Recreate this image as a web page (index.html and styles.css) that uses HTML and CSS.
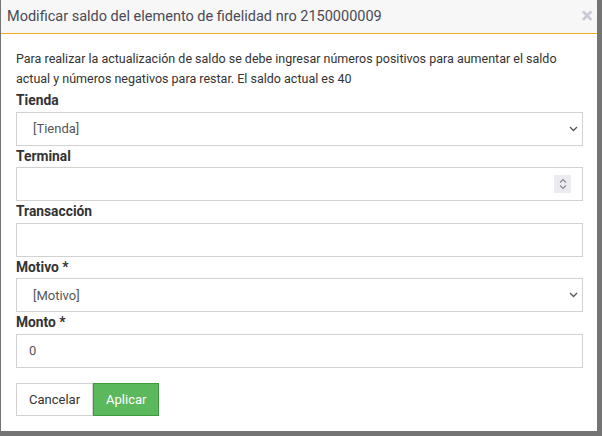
FILE: index.html
```html
<!doctype html>
<html lang="es">
  <head>
    <meta charset="UTF-8" />
    <title>Modificar saldo</title>
    <link rel="stylesheet" href="styles.css">
  </head>
  <body>
    <div class="modal">
      <div class="modal-header">
        <h4>Modificar saldo del elemento de fidelidad nro 2150000009</h4>
        <span class="close">×</span>
      </div>
      <div class="modal-body">
        <p class="help">
          Para realizar la actualización de saldo se debe ingresar números positivos para aumentar el saldo
          actual y números negativos para restar. El saldo actual es 40
        </p>

        <div class="form-group">
          <label>Tienda</label>
          <div class="field">
            <select class="form-control">
              <option>[Tienda]</option>
            </select>
            <svg class="caret" width="9" height="6" viewBox="0 0 9 6">
              <path d="M1 1 L4.5 4.5 L8 1" fill="none" stroke="#555" stroke-width="1.3" />
            </svg>
          </div>
        </div>

        <div class="form-group">
          <label>Terminal</label>
          <div class="field">
            <input type="text" class="form-control" />
            <span class="spinner">
              <svg width="10" height="14" viewBox="0 0 10 14">
                <path d="M2 5.5 L5 2.5 L8 5.5" fill="none" stroke="#8a8a9a" stroke-width="1.2" />
                <path d="M2 8.5 L5 11.5 L8 8.5" fill="none" stroke="#8a8a9a" stroke-width="1.2" />
              </svg>
            </span>
          </div>
        </div>

        <div class="form-group">
          <label>Transacción</label>
          <input type="text" class="form-control" />
        </div>

        <div class="form-group">
          <label>Motivo *</label>
          <div class="field">
            <select class="form-control">
              <option>[Motivo]</option>
            </select>
            <svg class="caret" width="9" height="6" viewBox="0 0 9 6">
              <path d="M1 1 L4.5 4.5 L8 1" fill="none" stroke="#555" stroke-width="1.3" />
            </svg>
          </div>
        </div>

        <div class="form-group">
          <label>Monto *</label>
          <input type="text" class="form-control" value="0" />
        </div>

        <div class="actions">
          <button class="btn btn-default">Cancelar</button>
          <button class="btn btn-success">Aplicar</button>
        </div>
      </div>
    </div>
  </body>
</html>
```

FILE: styles.css
```css
body {
  margin: 0;
  padding: 0;
  background: #747474;
  font-family: Roboto, 'Liberation Sans', Arial, sans-serif;
  color: #333;
}

.modal {
  width: 596px;
  height: 431px;
  margin-left: 1px;
  background: #fff;
  box-sizing: border-box;
}

.modal-header {
  height: 34px;
  background: #f7f7f7;
  border-bottom: 1px solid #f0ad1e;
  box-sizing: border-box;
  display: flex;
  align-items: center;
  justify-content: space-between;
  padding: 0 4px 0 6px;
}

.modal-header h4 {
  margin: 0;
  font-size: 14.5px;
  font-weight: normal;
  color: #4a4a55;
}

.close {
  font-size: 22px;
  font-weight: bold;
  color: #cbc7d6;
  line-height: 1;
  margin-top: -2px;
}

.modal-body {
  padding: 15px 14px 15px 15px;
}

.help {
  margin: 0 0 1px 0;
  font-size: 12.5px;
  line-height: 20px;
}

.form-group label {
  display: block;
  font-size: 13.8px;
  font-weight: bold;
  line-height: 20px;
  margin-bottom: 1.5px;
  color: #333;
}

.form-control {
  display: block;
  width: 100%;
  height: 34px;
  box-sizing: border-box;
  border: 1px solid #d2d2d2;
  border-radius: 0;
  background: #fff;
  padding: 6px 12px;
  font-family: Roboto, 'Liberation Sans', Arial, sans-serif;
  font-size: 13px;
  color: #555;
  outline: none;
}

select.form-control {
  appearance: none;
  -webkit-appearance: none;
  padding-left: 16px;
}

.field {
  position: relative;
}

.caret {
  position: absolute;
  right: 5px;
  top: 14px;
  pointer-events: none;
}

.spinner {
  position: absolute;
  right: 12px;
  top: 8px;
  width: 17px;
  height: 18px;
  background: #ebebf0;
  display: flex;
  align-items: center;
  justify-content: center;
}

.actions {
  display: flex;
  margin-top: 15px;
}

.btn {
  height: 33px;
  padding: 0 12px;
  font-family: Roboto, 'Liberation Sans', Arial, sans-serif;
  font-size: 13px;
  border-radius: 0;
  cursor: pointer;
}

.btn-default {
  background: #fff;
  border: 1px solid #d2d2d2;
  color: #333;
}

.btn-success {
  background: #5cb85c;
  border: 1px solid #3d9a3d;
  color: #fff;
}
```
